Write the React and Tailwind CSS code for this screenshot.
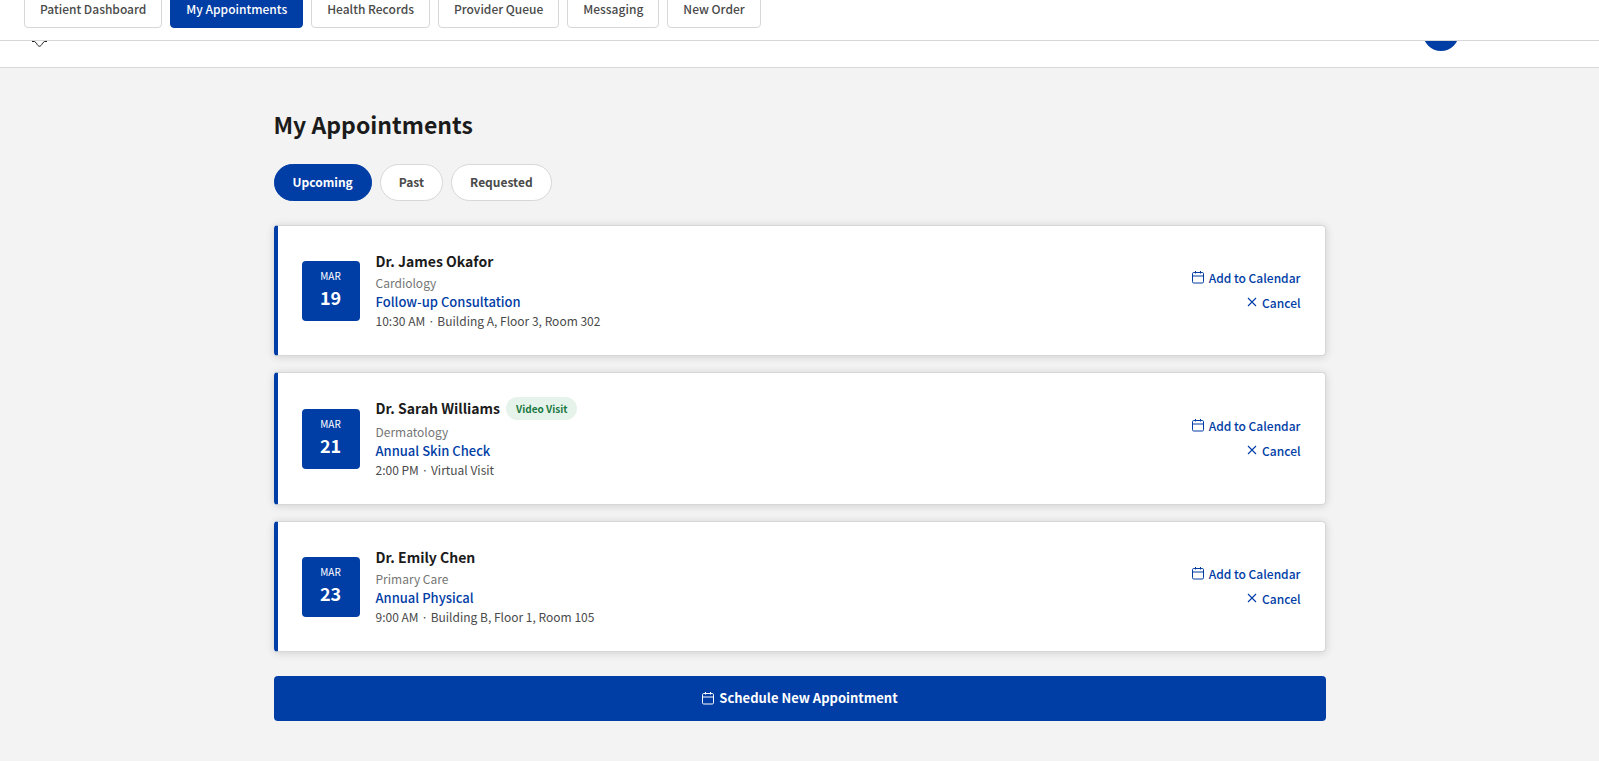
const TABS = ["Patient Dashboard", "My Appointments", "Health Records", "Provider Queue", "Messaging", "New Order"];
const FILTERS = ["Upcoming", "Past", "Requested"];
const APPOINTMENTS = [
  { day: "19", name: "Dr. James Okafor", dept: "Cardiology", kind: "Follow-up Consultation", where: "10:30 AM · Building A, Floor 3, Room 302" },
  { day: "21", name: "Dr. Sarah Williams", dept: "Dermatology", kind: "Annual Skin Check", where: "2:00 PM · Virtual Visit", video: true },
  { day: "23", name: "Dr. Emily Chen", dept: "Primary Care", kind: "Annual Physical", where: "9:00 AM · Building B, Floor 1, Room 105" },
];

function CalendarIcon() {
  return (
    <svg className="size-3.5" viewBox="0 0 14 14" fill="none" stroke="currentColor" aria-hidden="true">
      <rect x="1.5" y="2.5" width="11" height="10.5" rx="1.2" />
      <path d="M1.5 6h11M4.5 1v2.5M9.5 1v2.5" />
    </svg>
  );
}

function CloseIcon() {
  return (
    <svg className="size-3.5" viewBox="0 0 14 14" fill="none" stroke="currentColor" strokeWidth="1.1" aria-hidden="true">
      <path d="M3 3l8 8M11 3l-8 8" />
    </svg>
  );
}

function Card({ item }) {
  return (
    <article className="flex items-center gap-4 rounded-sm border border-l-4 border-[#d6d7d9] border-l-[#003da5] bg-white p-6 shadow-[0_1px_8px_rgba(0,0,0,0.15)]">
      <div className="w-[58px] rounded-sm bg-[#003da5] pt-[7px] pb-2.5 text-center text-white">
        <div className="text-[10px] leading-4 font-normal">MAR</div>
        <div className="text-lg leading-[27px] font-bold">{item.day}</div>
      </div>
      <div className="flex-1">
        <div className={`flex items-center gap-1.5 ${item.video ? "pb-0.5" : ""}`}>
          <h2 className="text-sm leading-[23px] font-bold text-[#1b1b1b]">{item.name}</h2>
          {item.video && (
            <span className="rounded-full bg-[#e6f3ea] px-2.5 text-[10px] leading-[23px] font-bold text-[#1b7a43]">Video Visit</span>
          )}
        </div>
        <p className="text-xs leading-[19px] text-[#757575]">{item.dept}</p>
        <p className="text-[13px] leading-[19px] font-medium text-[#003da5]">{item.kind}</p>
        <p className="text-xs leading-5 text-[#4a4a4a]">{item.where}</p>
      </div>
      <div className="flex flex-col items-end gap-1 pb-0.5 text-xs leading-[21px] font-medium text-[#003da5]">
        <button className="flex items-center gap-1"><CalendarIcon />Add to Calendar</button>
        <button className="flex items-center gap-[3px]"><CloseIcon />Cancel</button>
      </div>
    </article>
  );
}

export default function App() {
  return (
    <div className="min-h-screen bg-[#f3f3f3] font-['Noto_Sans_CJK_JP',sans-serif]">
      <nav className="flex h-[41px] items-end gap-2 overflow-hidden border-b border-[#d6d7d9] bg-white px-6 pb-3">
        {TABS.map((t) => (
          <button
            key={t}
            className={`rounded-sm border px-[15px] pt-[7px] pb-[9px] text-xs leading-[19px] font-medium ${t === "My Appointments" ? "border-[#003da5] bg-[#003da5] text-white" : "border-[#d6d7d9] bg-white text-[#4a4a4a]"}`}
          >
            {t}
          </button>
        ))}
      </nav>
      <header className="flex h-[27px] items-end justify-between overflow-hidden border-b border-[#d6d7d9] bg-white pr-[140px] pb-4 pl-8">
        <svg className="mb-1 h-4 w-4 shrink-0" viewBox="0 0 16 16" fill="none" stroke="#1b1b1b" aria-hidden="true">
          <path d="M0 10.5h2.5l2 1.7c.8 1.8 1.8 3 3 3s2.2-1.2 3-3l2-1.7H15" />
        </svg>
        <div className="size-9 shrink-0 rounded-full bg-[#003da5]" />
      </header>
      <main className="mx-auto max-w-[1100px] px-6 pt-10 pb-10">
        <h1 className="text-[23px] leading-8 font-bold text-[#1b1b1b]">My Appointments</h1>
        <div className="mt-6 flex gap-2">
          {FILTERS.map((f) => (
            <button
              key={f}
              className={`rounded-full border px-[18px] pt-[7px] pb-[9px] text-xs leading-[19px] font-bold ${f === "Upcoming" ? "border-[#003da5] bg-[#003da5] text-white" : "border-[#d6d7d9] bg-white text-[#4a4a4a]"}`}
            >
              {f}
            </button>
          ))}
        </div>
        <div className="mt-6 flex flex-col gap-4">
          {APPOINTMENTS.map((a) => <Card key={a.day} item={a} />)}
        </div>
        <button className="mt-6 flex w-full items-center justify-center gap-1 rounded-sm bg-[#003da5] pt-[11px] pb-[13px] text-[13px] leading-[21px] font-bold text-white">
          <CalendarIcon />Schedule New Appointment
        </button>
      </main>
    </div>
  );
}
